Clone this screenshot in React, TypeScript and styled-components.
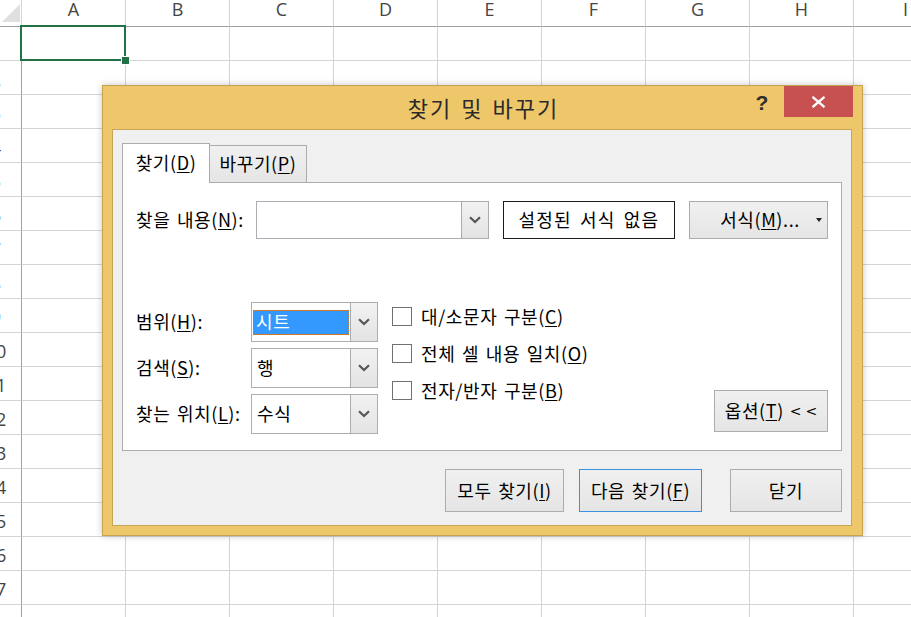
import React from "react";
import styled, { createGlobalStyle } from "styled-components";

const KR = `"Noto Sans CJK KR", "Noto Sans", sans-serif`;
const LAT = `"Open Sans", "Noto Sans", sans-serif`;

const GlobalStyle = createGlobalStyle`
  html, body { margin: 0; padding: 0; width: 911px; height: 617px; overflow: hidden; background: #fff; }
  #root { width: 911px; height: 617px; overflow: hidden; }
  * { box-sizing: border-box; }
`;

const Page = styled.div`
  position: relative;
  width: 911px;
  height: 617px;
  overflow: hidden;
  font-family: ${LAT};
`;

/* ---------- spreadsheet ---------- */
const Sheet = styled.div`
  display: grid;
  grid-template-columns: 22px repeat(9, 104px);
  grid-template-rows: 27px;
  grid-auto-rows: 34px;
  width: max-content;
`;

const Corner = styled.div`
  border-right: 1px solid #d4d4d4;
  border-bottom: 1px solid #a0a0a0;
  display: flex;
  align-items: flex-start;
  justify-content: flex-end;
  padding-top: 3px;
`;

const ColHeader = styled.div`
  border-right: 1px solid #d4d4d4;
  border-bottom: 1px solid #a0a0a0;
  display: flex;
  justify-content: center;
  align-items: flex-start;
  font-size: 18px;
  line-height: 18px;
  color: #444;
`;

const RowHeader = styled.div`
  border-right: 1px solid #a0a0a0;
  border-bottom: 1px solid #d4d4d4;
  overflow: hidden;
  display: flex;
  justify-content: flex-end;
  align-items: center;
`;

const RowNum = styled.span`
  flex: 0 0 50px;
  text-align: center;
  font-size: 18px;
  line-height: 18px;
  color: #444;
  padding-top: 2px;
`;

const Cell = styled.div`
  position: relative;
  border-right: 1px solid #d4d4d4;
  border-bottom: 1px solid #d4d4d4;
`;

const Selection = styled.div`
  position: absolute;
  left: -2px;
  top: -2px;
  right: -1px;
  bottom: -1px;
  border: 2px solid #217346;
  z-index: 1;
`;

const FillHandle = styled.div`
  position: absolute;
  right: -5px;
  bottom: -5px;
  width: 7px;
  height: 7px;
  background: #217346;
  box-shadow: 0 0 0 1px #fff;
`;

/* ---------- dialog ---------- */
const Dialog = styled.div`
  position: absolute;
  left: 102px;
  top: 85px;
  width: 761px;
  height: 451px;
  border: 1px solid #c6a14e;
  background: #efc76b;
  box-shadow: 0 0 7px rgba(0, 0, 0, 0.22);
  display: flex;
  flex-direction: column;
  font-family: ${KR};
  color: #000;
  letter-spacing: 0.6px;
  word-spacing: 2px;
`;

const TitleBar = styled.div`
  height: 43px;
  flex: 0 0 43px;
  display: grid;
  grid-template-columns: 1fr auto 1fr;
  align-items: start;
`;

const Title = styled.div`
  grid-column: 2;
  font-size: 22px;
  line-height: 43px;
  color: #2a2a2a;
  letter-spacing: 2px;
  word-spacing: 2px;
  padding-left: 2px;
`;

const TitleControls = styled.div`
  grid-column: 3;
  justify-self: end;
  display: flex;
  align-items: flex-start;
  margin-right: 9px;
`;

const Help = styled.div`
  font-family: "Liberation Sans", "DejaVu Sans", sans-serif;
  font-weight: 700;
  font-size: 21px;
  line-height: 21px;
  color: #2e2e2e;
  margin-top: 6px;
  margin-right: 15px;
`;

const CloseButton = styled.div`
  width: 69px;
  height: 31px;
  background: #c75050;
  display: flex;
  align-items: center;
  justify-content: center;
`;

const Client = styled.div`
  flex: 1;
  margin: 0 10px 9px 9px;
  border: 1px solid #c8a556;
  background: #f0f0f0;
  padding: 13px 9px 13px 9px;
  display: flex;
  flex-direction: column;
`;

const Tabs = styled.div`
  display: flex;
  align-items: flex-end;
  margin-bottom: -1px;
  position: relative;
  z-index: 1;
`;

const Tab = styled.div<{ $active?: boolean }>`
  width: ${(p) => (p.$active ? 88 : 98)}px;
  height: ${(p) => (p.$active ? 40 : 38)}px;
  margin-left: ${(p) => (p.$active ? 0 : -1)}px;
  border: 1px solid #acacac;
  border-bottom: ${(p) => (p.$active ? "none" : "1px solid #acacac")};
  background: ${(p) => (p.$active ? "#fff" : "linear-gradient(#f0f0f0, #e5e5e5)")};
  position: relative;
  z-index: ${(p) => (p.$active ? 2 : 1)};
  display: flex;
  align-items: center;
  justify-content: center;
  font-size: 18px;
  line-height: 1.2;
  padding-bottom: ${(p) => (p.$active ? 1 : 0)}px;
`;

const U = styled.span`
  text-decoration: underline;
  text-underline-offset: 2px;
  text-decoration-thickness: 1px;
`;

const Panel = styled.div`
  height: 269px;
  border: 1px solid #acacac;
  background: #fff;
  display: flex;
  flex-direction: column;
  justify-content: space-between;
`;

const FindRow = styled.div`
  display: flex;
  align-items: center;
  padding: 18px 0 0 13px;
`;

const Label = styled.div<{ $w?: number }>`
  ${(p) => (p.$w ? `width: ${p.$w}px; flex: 0 0 ${p.$w}px;` : "")}
  font-size: 18px;
  line-height: 1.2;
  white-space: nowrap;
`;

const Combo = styled.div<{ $w: number; $h: number }>`
  width: ${(p) => p.$w}px;
  height: ${(p) => p.$h}px;
  border: 1px solid #abadb3;
  background: #fff;
  display: flex;
`;

const ComboValue = styled.div`
  flex: 1;
  display: flex;
  align-items: center;
  padding-left: 5px;
  font-size: 18px;
  line-height: 1.2;
`;

const ComboSelected = styled.div`
  flex: 1;
  display: flex;
  align-items: center;
  padding: 0 1px;
`;

const Highlight = styled.div`
  flex: 1;
  height: 25px;
  background: #3399ff;
  color: #fff;
  outline: 1px dotted #d27a22;
  outline-offset: -1px;
  display: flex;
  align-items: center;
  padding-left: 3px;
  font-size: 18px;
  line-height: 1.2;
`;

const ComboArrow = styled.div`
  width: 27px;
  flex: 0 0 27px;
  border-left: 1px solid #acacac;
  background: linear-gradient(#f2f2f2, #e3e3e3);
  display: flex;
  align-items: center;
  justify-content: center;
`;

const FormatBox = styled.div`
  width: 172px;
  height: 38px;
  margin-left: 14px;
  border: 1px solid #1a1a1a;
  background: #fff;
  display: flex;
  align-items: center;
  justify-content: center;
  font-size: 18px;
  line-height: 1.2;
  letter-spacing: 1.2px;
  word-spacing: 3px;
`;

const FormatButton = styled.div`
  width: 139px;
  height: 38px;
  margin-left: 14px;
  border: 1px solid #acacac;
  background: linear-gradient(#f0f0f0, #e5e5e5);
  display: grid;
  grid-template-columns: 1fr auto 1fr;
  align-items: center;
  font-size: 18px;
  line-height: 1.2;
`;

const FormatText = styled.span`
  grid-column: 2;
  padding-left: 3px;
`;

const DropTriangle = styled.span`
  grid-column: 3;
  justify-self: end;
  margin-right: 5px;
  width: 0;
  height: 0;
  border-left: 3.5px solid transparent;
  border-right: 3.5px solid transparent;
  border-top: 4px solid #222;
`;

const Lower = styled.div`
  display: flex;
  align-items: flex-start;
  padding: 0 13px 16px 13px;
`;

const FieldGrid = styled.div`
  display: grid;
  grid-template-columns: 115px 127px;
  grid-auto-rows: 40px;
  row-gap: 6px;
  align-items: center;
  margin-top: 4px;
`;

const CheckList = styled.div`
  margin-left: 14px;
  display: flex;
  flex-direction: column;
`;

const CheckItem = styled.div`
  height: 37px;
  display: flex;
  align-items: center;
  gap: 9px;
  font-size: 18px;
  line-height: 1.2;
`;

const Box = styled.span`
  width: 20px;
  height: 19px;
  border: 1px solid #707070;
  background: #fff;
`;

const Button = styled.div<{ $w: number; $h: number; $default?: boolean }>`
  width: ${(p) => p.$w}px;
  height: ${(p) => p.$h}px;
  border: 1px solid ${(p) => (p.$default ? "#3d8fe0" : "#acacac")};
  background: linear-gradient(#f0f0f0, #e5e5e5);
  display: flex;
  align-items: center;
  justify-content: center;
  font-size: 18px;
  line-height: 1.2;
  white-space: nowrap;
`;

const OptionsButton = styled(Button)`
  margin-left: auto;
  align-self: flex-end;
  margin-bottom: 2px;
`;

const Arrows = styled.span`
  font-family: "DejaVu Sans", sans-serif;
  font-size: 14px;
  letter-spacing: 4px;
  margin-left: 6px;
  margin-right: -4px;
`;

const ButtonRow = styled.div`
  display: flex;
  justify-content: flex-end;
  margin-top: 18px;
`;

const Gap = styled.div<{ $w: number }>`
  width: ${(p) => p.$w}px;
`;

const Chevron = () => (
  <svg width="12" height="8" viewBox="0 0 12 8">
    <polyline points="1,1.2 6,6 11,1.2" fill="none" stroke="#555" strokeWidth="2.2" />
  </svg>
);

const CloseX = () => (
  <svg width="15" height="12" viewBox="0 0 15 12">
    <line x1="1.5" y1="0.8" x2="13.5" y2="11.2" stroke="#fff" strokeWidth="2.3" />
    <line x1="13.5" y1="0.8" x2="1.5" y2="11.2" stroke="#fff" strokeWidth="2.3" />
  </svg>
);

const COLS = ["A", "B", "C", "D", "E", "F", "G", "H", "I"];
const ROWS = Array.from({ length: 18 }, (_, i) => i + 1);

export default function App() {
  return (
    <Page>
      <GlobalStyle />
      <Sheet>
        <Corner>
          <svg width="19" height="20" viewBox="0 0 19 20">
            <polygon points="18,1 18,19 0,19" fill="#dfdfdf" />
          </svg>
        </Corner>
        {COLS.map((c) => (
          <ColHeader key={c}>{c}</ColHeader>
        ))}
        {ROWS.map((r) => (
          <React.Fragment key={r}>
            <RowHeader>
              <RowNum>{r}</RowNum>
            </RowHeader>
            {COLS.map((c) => (
              <Cell key={c}>
                {r === 1 && c === "A" && (
                  <Selection>
                    <FillHandle />
                  </Selection>
                )}
              </Cell>
            ))}
          </React.Fragment>
        ))}
      </Sheet>

      <Dialog>
        <TitleBar>
          <Title>찾기 및 바꾸기</Title>
          <TitleControls>
            <Help>?</Help>
            <CloseButton>
              <CloseX />
            </CloseButton>
          </TitleControls>
        </TitleBar>
        <Client>
          <Tabs>
            <Tab $active>
              찾기(<U>D</U>)
            </Tab>
            <Tab>
              바꾸기(<U>P</U>)
            </Tab>
          </Tabs>
          <Panel>
            <FindRow>
              <Label $w={120}>
                찾을 내용(<U>N</U>):
              </Label>
              <Combo $w={233} $h={38}>
                <ComboValue />
                <ComboArrow>
                  <Chevron />
                </ComboArrow>
              </Combo>
              <FormatBox>설정된 서식 없음</FormatBox>
              <FormatButton>
                <FormatText>
                  서식(<U>M</U>)...
                </FormatText>
                <DropTriangle />
              </FormatButton>
            </FindRow>
            <Lower>
              <FieldGrid>
                <Label>
                  범위(<U>H</U>):
                </Label>
                <Combo $w={127} $h={40}>
                  <ComboSelected>
                    <Highlight>시트</Highlight>
                  </ComboSelected>
                  <ComboArrow>
                    <Chevron />
                  </ComboArrow>
                </Combo>
                <Label>
                  검색(<U>S</U>):
                </Label>
                <Combo $w={127} $h={40}>
                  <ComboValue>행</ComboValue>
                  <ComboArrow>
                    <Chevron />
                  </ComboArrow>
                </Combo>
                <Label>
                  찾는 위치(<U>L</U>):
                </Label>
                <Combo $w={127} $h={40}>
                  <ComboValue>수식</ComboValue>
                  <ComboArrow>
                    <Chevron />
                  </ComboArrow>
                </Combo>
              </FieldGrid>
              <CheckList>
                <CheckItem>
                  <Box />
                  <span>
                    대/소문자 구분(<U>C</U>)
                  </span>
                </CheckItem>
                <CheckItem>
                  <Box />
                  <span>
                    전체 셀 내용 일치(<U>O</U>)
                  </span>
                </CheckItem>
                <CheckItem>
                  <Box />
                  <span>
                    전자/반자 구분(<U>B</U>)
                  </span>
                </CheckItem>
              </CheckList>
              <OptionsButton $w={114} $h={42}>
                옵션(<U>T</U>)<Arrows>&lt;&lt;</Arrows>
              </OptionsButton>
            </Lower>
          </Panel>
          <ButtonRow>
            <Button $w={119} $h={43}>
              모두 찾기(<U>I</U>)
            </Button>
            <Gap $w={15} />
            <Button $w={123} $h={43} $default>
              다음 찾기(<U>F</U>)
            </Button>
            <Gap $w={28} />
            <Button $w={112} $h={43}>
              닫기
            </Button>
          </ButtonRow>
        </Client>
      </Dialog>
    </Page>
  );
}
